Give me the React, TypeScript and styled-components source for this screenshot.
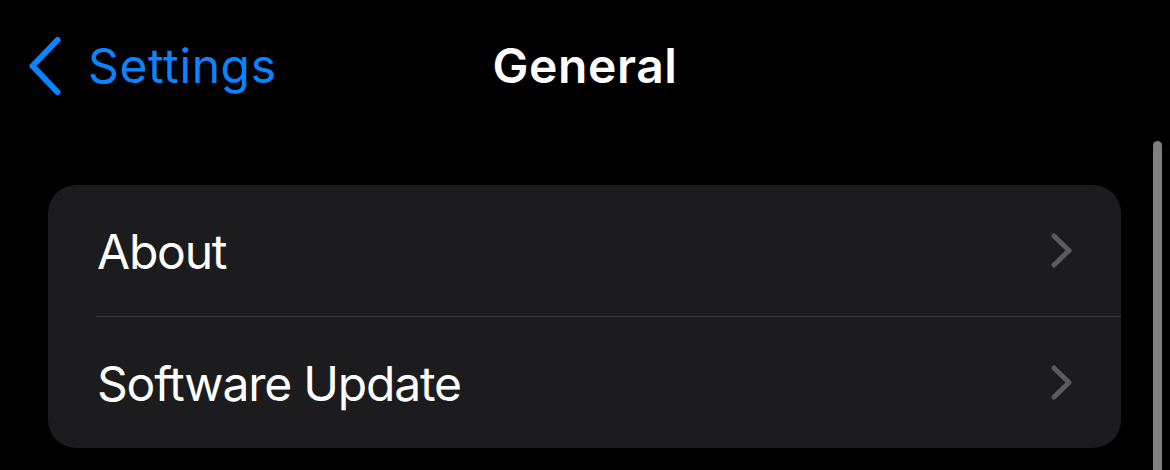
import React from "react";
import styled, { createGlobalStyle } from "styled-components";

const GlobalStyle = createGlobalStyle`
  html, body {
    margin: 0;
    padding: 0;
    background: #000000;
  }
  body {
    font-family: Inter, "Noto Sans", "Liberation Sans", sans-serif;
    -webkit-font-smoothing: antialiased;
  }
`;

const Screen = styled.div`
  position: relative;
  width: 1170px;
  height: 470px;
  overflow: hidden;
  background: #000000;
  display: flex;
  flex-direction: column;
`;

const NavBar = styled.header`
  height: 132px;
  display: grid;
  grid-template-columns: 1fr auto 1fr;
  align-items: center;
`;

const BackButton = styled.button`
  justify-self: start;
  display: flex;
  align-items: center;
  gap: 27px;
  padding: 0 0 0 29px;
  margin: 0;
  border: none;
  background: transparent;
  color: #0a84ff;
  font-family: Inter, "Noto Sans", "Liberation Sans", sans-serif;
  font-size: 48px;
  line-height: 48px;
  font-weight: 400;
  letter-spacing: 0.6px;
  cursor: pointer;
`;

const Title = styled.h1`
  margin: 0;
  color: #ffffff;
  font-size: 48px;
  line-height: 48px;
  font-weight: 600;
  letter-spacing: 0.6px;
`;

const Content = styled.main`
  padding: 53px 49px 0 48px;
`;

const Group = styled.section`
  background: #1c1c1e;
  border-radius: 28px;
  overflow: hidden;
`;

const Row = styled.div`
  display: flex;
  padding-left: 48px;
  cursor: pointer;
`;

const RowBody = styled.div<{ $divider: boolean }>`
  flex: 1;
  height: 131px;
  display: flex;
  align-items: center;
  justify-content: space-between;
  padding-right: 49px;
  border-top: ${(p) => (p.$divider ? "1px solid #3a3a3d" : "none")};
`;

const Label = styled.span`
  color: #ffffff;
  font-size: 48px;
  line-height: 48px;
  font-weight: 400;
  padding-left: 1px;
  padding-top: 3px;
  letter-spacing: -1.2px;
`;

const ScrollThumb = styled.div`
  position: absolute;
  top: 141px;
  right: 8px;
  width: 9px;
  height: 400px;
  border-radius: 5px;
  background: #7f7f7f;
`;

const BackChevron = () => (
  <svg width="32" height="58" viewBox="0 0 32 58" aria-hidden="true">
    <path
      d="M28.5 3 L3.5 29 L28.5 55"
      fill="none"
      stroke="#0a84ff"
      strokeWidth="6"
      strokeLinecap="round"
      strokeLinejoin="round"
    />
  </svg>
);

const Disclosure = () => (
  <svg width="21" height="35" viewBox="0 0 21 35" aria-hidden="true">
    <path
      d="M3 3 L18 17.5 L3 32"
      fill="none"
      stroke="#5b5b60"
      strokeWidth="5"
      strokeLinecap="round"
      strokeLinejoin="round"
    />
  </svg>
);

const items = ["About", "Software Update"];

export default function App() {
  return (
    <>
      <GlobalStyle />
      <Screen>
        <NavBar>
          <BackButton>
            <BackChevron />
            Settings
          </BackButton>
          <Title>General</Title>
          <div />
        </NavBar>
        <Content>
          <Group>
            {items.map((label, i) => (
              <Row key={label}>
                <RowBody $divider={i > 0}>
                  <Label>{label}</Label>
                  <Disclosure />
                </RowBody>
              </Row>
            ))}
          </Group>
        </Content>
        <ScrollThumb />
      </Screen>
    </>
  );
}
